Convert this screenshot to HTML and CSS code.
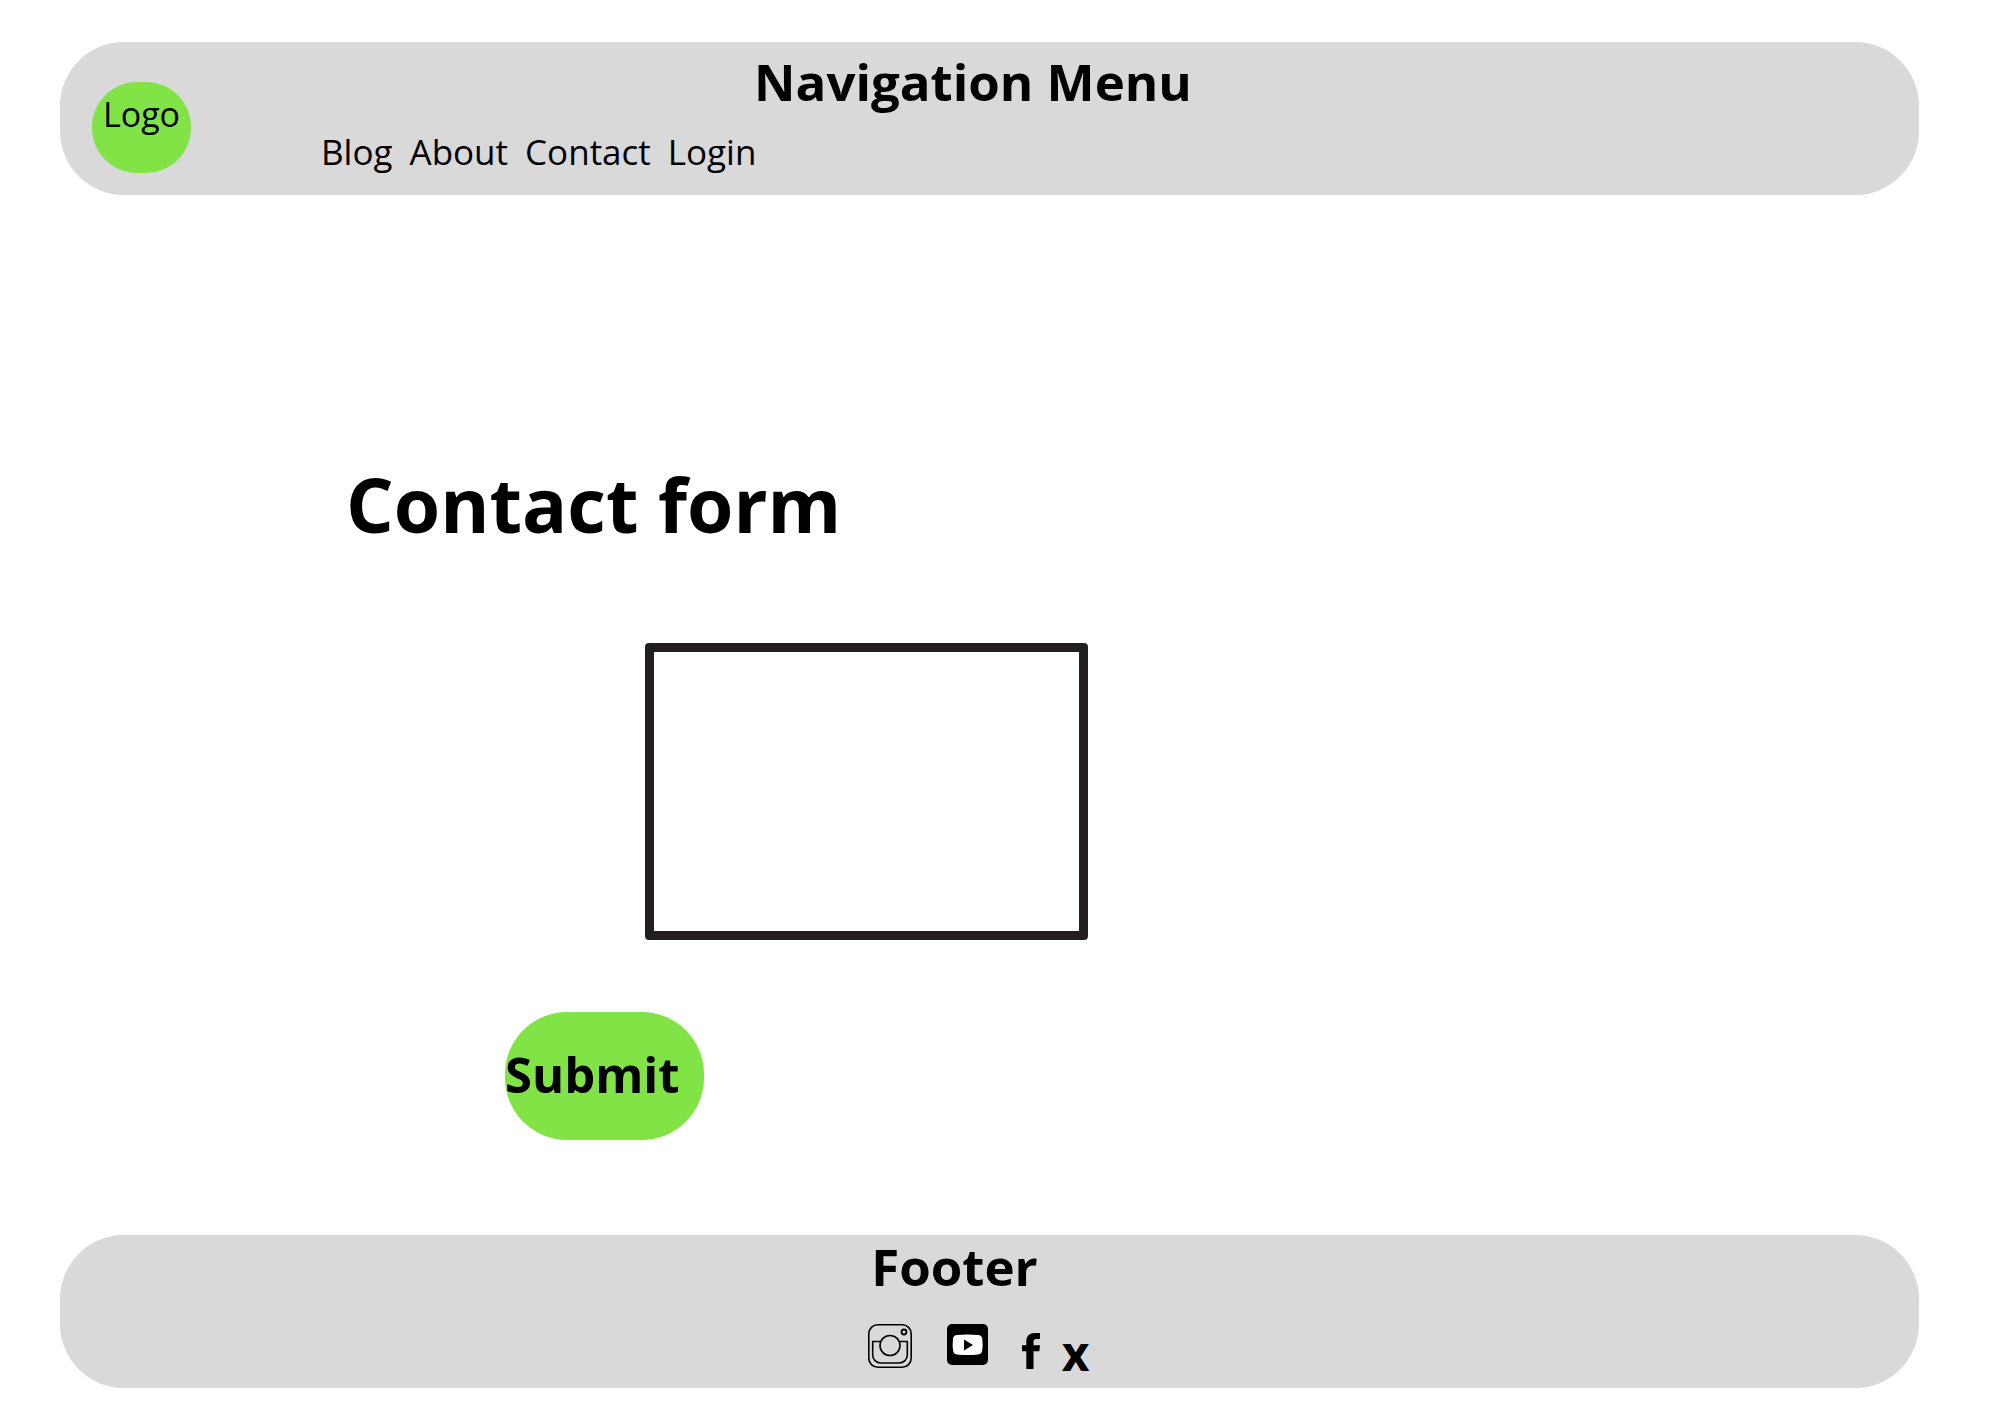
FILE: index.html
```html
<!DOCTYPE html>
<html lang="en">
<head>
  <meta charset="utf-8">
  <meta name="viewport" content="width=device-width, initial-scale=1">
  <title>Contact form</title>
  <link rel="stylesheet" href="styles.css">
</head>
<body class="page">
  <header class="bar header">
    <a class="logo" href="#">Logo</a>
    <div class="header-content">
      <h2 class="bar-title">Navigation Menu</h2>
      <nav class="menu">
        <a class="menu-link" href="#">Blog</a>
        <a class="menu-link" href="#">About</a>
        <a class="menu-link" href="#">Contact</a>
        <a class="menu-link" href="#">Login</a>
      </nav>
    </div>
  </header>

  <main class="main">
    <form class="contact">
      <h1 class="contact-title"><label for="message">Contact form</label></h1>
      <textarea class="message" id="message" name="message"></textarea>
      <button class="submit" type="submit">Submit</button>
    </form>
  </main>

  <footer class="bar footer">
    <h2 class="bar-title">Footer</h2>
    <div class="social">
      <a class="social-link" href="#" aria-label="Instagram">
        <svg class="icon" width="44" height="44" viewBox="0 0 44 44" fill="none" stroke="#000" stroke-width="1.6">
          <rect x=".8" y=".8" width="42.4" height="42.4" rx="9"/>
          <path d="M12 17.5H4.7V31a8 8 0 0 0 8 8h18.6a8 8 0 0 0 8-8V17.5H32"/>
          <circle cx="22" cy="21.5" r="10"/>
          <circle cx="36" cy="8" r="2.5" stroke-width="1.8"/>
        </svg>
      </a>
      <a class="social-link youtube" href="#" aria-label="YouTube">
        <svg class="icon" width="41" height="41" viewBox="0 0 41 41">
          <rect width="41" height="41" rx="5"/>
          <path fill="#fff" d="M10 11Q20.5 10 31 11Q35 11.3 35.3 15Q36 20.5 35.3 26Q35 30 31 30.5Q20.5 31.5 10 30.5Q6.3 30 6 26Q5.3 20.5 6 15Q6.3 11.3 10 11Z"/>
          <path d="M17 15.5V26.5L26 21Z"/>
        </svg>
      </a>
      <a class="social-link facebook" href="#" aria-label="Facebook">
        <svg class="icon" width="18" height="36" viewBox="0 0 18 36">
          <path d="M4.3 36V18.3H0V12.3H4.3V8.5C4.3 3 7.5 0 12.5 0H18V6H14.3C12.3 6 11.5 7 11.5 8.8V12.3H18L17.3 18.3H11.5V36Z"/>
        </svg>
      </a>
      <a class="social-link x" href="#">x</a>
    </div>
  </footer>
</body>
</html>
```

FILE: styles.css
```css
* {
  box-sizing: border-box;
}

.page {
  display: flex;
  flex-direction: column;
  min-height: 100vh;
  margin: 0;
  padding: 42px 81px 26px 60px;
  background: #fff;
  color: #000;
  font-family: "Open Sans", "Noto Sans", sans-serif;
}

.bar {
  min-height: 153px;
  border-radius: 64px;
  background: #d9d9d9;
}

.bar-title {
  margin: 0;
  font-size: 51px;
  font-weight: 700;
  line-height: 62px;
  text-align: center;
}

.header {
  display: flex;
  gap: 130px;
  padding: 8px 294px 0 32px;
}

.logo {
  flex: none;
  width: 99px;
  height: 91px;
  margin-top: 32px;
  border-radius: 45px;
  background: #81e346;
  color: #000;
  font-size: 34px;
  line-height: 64px;
  text-align: center;
  text-decoration: none;
}

.header-content {
  flex: 1;
}

.menu {
  display: flex;
  flex-wrap: wrap;
  gap: 17px;
  margin-top: 16px;
}

.menu-link {
  color: #000;
  font-size: 35px;
  line-height: 48px;
  text-decoration: none;
}

.main {
  flex: 1;
  padding: 259px 0 94px 286px;
}

.contact {
  display: flex;
  flex-direction: column;
  align-items: flex-start;
}

.contact-title {
  margin: 0;
  font-size: 75px;
  font-weight: 700;
  line-height: 100px;
}

.message {
  width: 443px;
  height: 297px;
  margin: 89px 0 0 299px;
  padding: 12px;
  border: 9px solid #231f20;
  border-radius: 4px;
  background: #fff;
  font: inherit;
  font-size: 34px;
  resize: none;
}

.submit {
  width: 199px;
  height: 128px;
  margin: 72px 0 0 159px;
  padding: 0 0 4px;
  border: 0;
  border-radius: 62px;
  background: #81e346;
  color: #000;
  font: inherit;
  font-size: 49px;
  font-weight: 700;
  text-align: left;
}

.footer {
  padding-right: 70px;
}

.social {
  display: flex;
  justify-content: center;
  align-items: flex-start;
  margin: 27px 0 0 48px;
}

.social-link {
  color: #000;
  text-decoration: none;
}

.icon {
  display: block;
}

.youtube {
  margin-left: 35px;
}

.facebook {
  margin: 9px 0 0 34px;
}

.x {
  margin-left: 22px;
  font-size: 48px;
  font-weight: 700;
  line-height: 58px;
}
```
